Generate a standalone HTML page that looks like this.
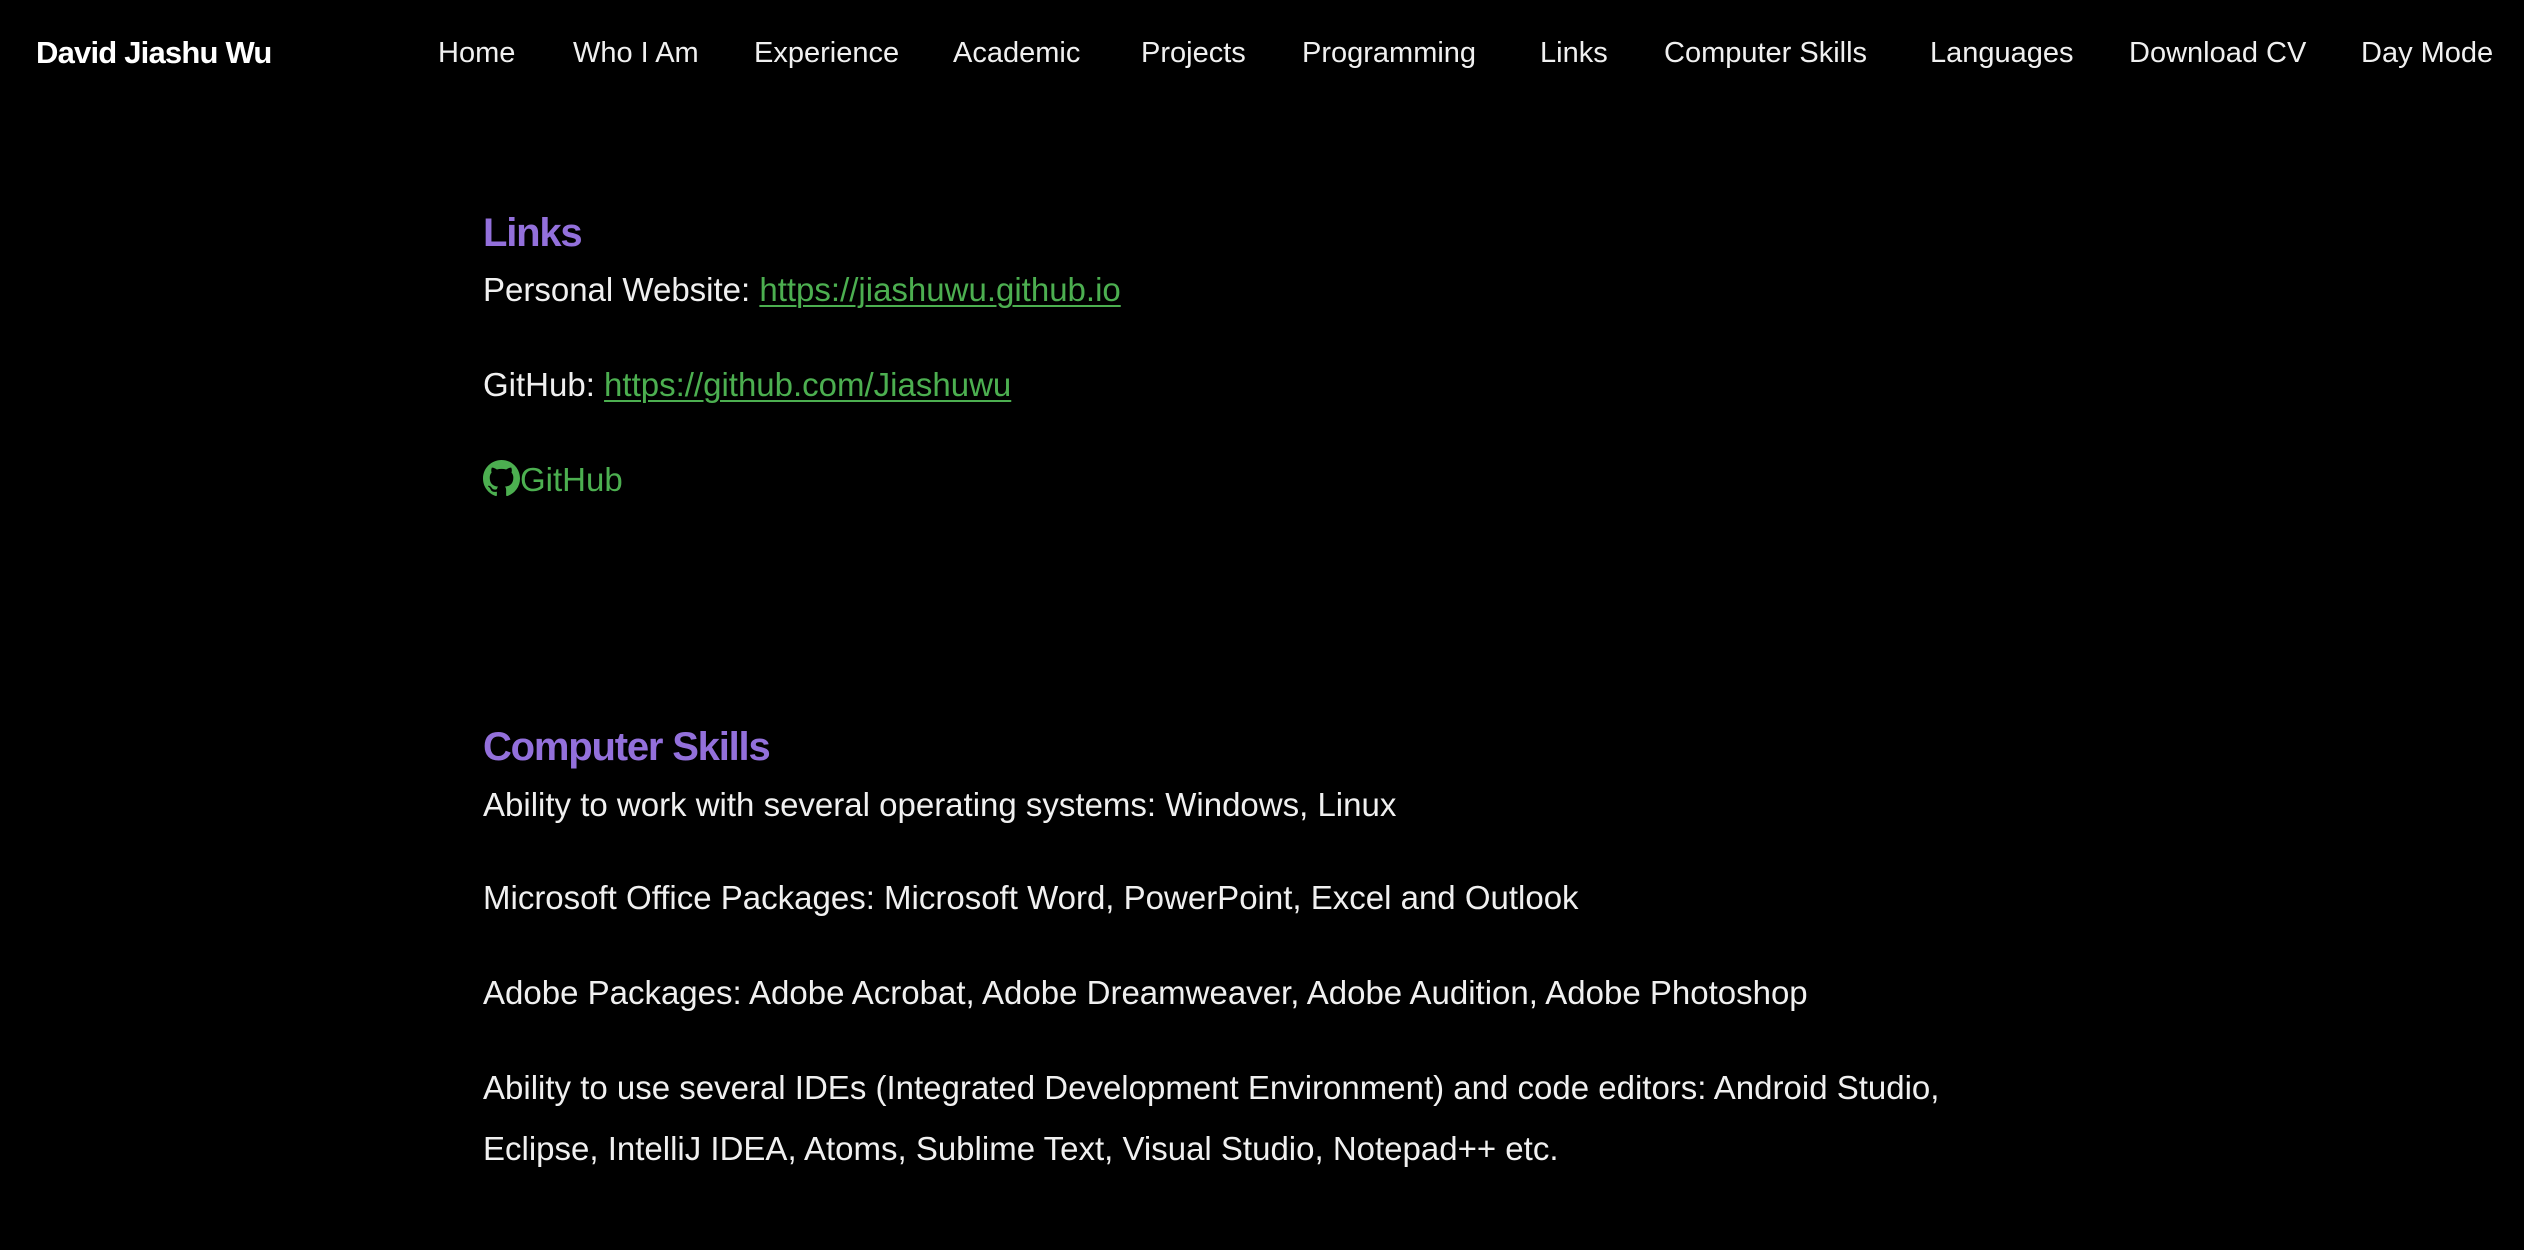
<!DOCTYPE html>
<html><head><meta charset="utf-8"><style>
html,body{margin:0;padding:0;background:#000;width:2524px;height:1250px;overflow:hidden;font-family:"Liberation Sans",sans-serif;color:#f0f0f0}
.a{position:absolute;white-space:nowrap}
.nav{font-size:29px;line-height:40px;top:33px;color:#f0f0f0}
.logo{left:36px;top:33px;font-size:31px;line-height:40px;font-weight:bold;letter-spacing:-0.8px;color:#fff}
.h{font-size:40px;font-weight:bold;color:#9370db;letter-spacing:-1.2px;line-height:50px;left:483px}
.t{font-size:33px;line-height:40px;left:483px;letter-spacing:0}
a{color:#4caf50;text-decoration:underline;text-decoration-thickness:2px;text-underline-offset:4px}
</style></head><body>
<div class="a logo">David Jiashu Wu</div>
<div class="a nav" style="left:438px">Home</div>
<div class="a nav" style="left:573px">Who I Am</div>
<div class="a nav" style="left:754px">Experience</div>
<div class="a nav" style="left:953px">Academic</div>
<div class="a nav" style="left:1141px">Projects</div>
<div class="a nav" style="left:1302px">Programming</div>
<div class="a nav" style="left:1540px">Links</div>
<div class="a nav" style="left:1664px">Computer Skills</div>
<div class="a nav" style="left:1930px">Languages</div>
<div class="a nav" style="left:2129px">Download CV</div>
<div class="a nav" style="left:2361px">Day Mode</div>

<div class="a h" style="top:208px">Links</div>
<div class="a t" style="top:270px">Personal Website: <a>https://jiashuwu.github.io</a></div>
<div class="a t" style="top:365px">GitHub: <a>https://github.com/Jiashuwu</a></div>
<div class="a t" style="top:460px;color:#4caf50"><svg width="37" height="37" viewBox="0 0 16 16" style="vertical-align:-6px"><path fill="#4caf50" d="M8 0C3.58 0 0 3.58 0 8c0 3.54 2.290 6.53 5.47 7.59.4.07.55-.17.55-.38 0-.19-.01-.82-.01-1.49-2.01.37-2.53-.49-2.690-.94-.09-.23-.48-.94-.82-1.13-.28-.15-.68-.52-.01-.53.63-.01 1.08.58 1.23.82.72 1.21 1.87.87 2.33.66.07-.52.28-.87.51-1.07-1.78-.2-3.64-.89-3.64-3.95 0-.87.31-1.59.82-2.15-.08-.2-.36-1.02.08-2.12 0 0 .67-.21 2.2.82.64-.18 1.32-.27 2-.27.68 0 1.36.09 2 .27 1.53-1.04 2.2-.82 2.2-.82.44 1.1.16 1.92.08 2.12.51.56.82 1.27.82 2.15 0 3.07-1.87 3.75-3.65 3.95.29.25.54.73.54 1.48 0 1.07-.01 1.93-.01 2.2 0 .21.15.46.55.38A8.013 8.013 0 0016 8c0-4.42-3.58-8-8-8z"/></svg>GitHub</div>

<div class="a h" style="top:722px">Computer Skills</div>
<div class="a t" style="top:785px">Ability to work with several operating systems: Windows, Linux</div>
<div class="a t" style="top:878px">Microsoft Office Packages: Microsoft Word, PowerPoint, Excel and Outlook</div>
<div class="a t" style="top:973px">Adobe Packages: Adobe Acrobat, Adobe Dreamweaver, Adobe Audition, Adobe Photoshop</div>
<div class="a t" style="top:1068px">Ability to use several IDEs (Integrated Development Environment) and code editors: Android Studio,</div>
<div class="a t" style="top:1129px">Eclipse, IntelliJ IDEA, Atoms, Sublime Text, Visual Studio, Notepad++ etc.</div>
</body></html>
